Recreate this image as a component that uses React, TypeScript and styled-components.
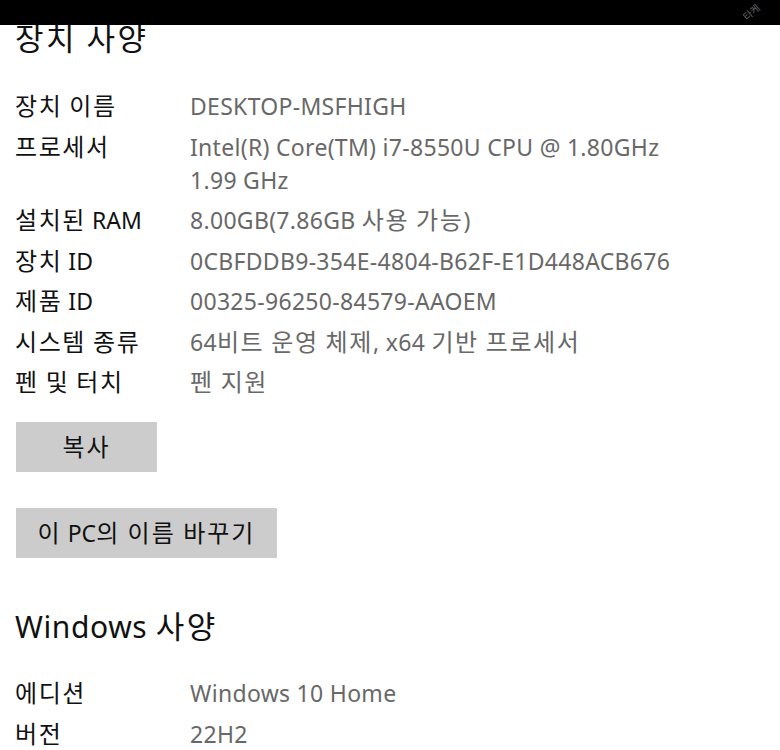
import React from "react";
import styled, { createGlobalStyle } from "styled-components";

const Global = createGlobalStyle`
  html, body { margin: 0; padding: 0; background: #fff; }
  body { font-family: "Noto Sans", "Noto Sans CJK KR", sans-serif; }
`;

const Page = styled.div`
  width: 780px;
  height: 750px;
  overflow: hidden;
  position: relative;
  background: #fff;
`;

const TopBar = styled.div`
  height: 25px;
  background: #000;
  position: relative;
  z-index: 1;
`;

const Watermark = styled.span`
  position: absolute;
  right: 20px;
  top: 6px;
  color: rgba(255, 255, 255, 0.4);
  font-size: 10px;
  line-height: 12px;
  transform: rotate(-40deg);
  font-family: "Noto Sans CJK KR", sans-serif;
`;

const Content = styled.div`
  padding: 0 0 0 15px;
  display: flex;
  flex-direction: column;
`;

const Heading = styled.h1<{ $top: number }>`
  margin: ${(p) => p.$top}px 0 0 0;
  height: 30px;
  font-family: "Noto Sans", "Noto Sans CJK KR", sans-serif;
  font-weight: 400;
  font-size: 30px;
  line-height: 30px;
  color: #111;
  letter-spacing: 0.6px;
  white-space: nowrap;
`;

/* Hangul runs: Malgun-Gothic-like size and spacing */
const Ko = styled.span<{ $size: number; $ls: number }>`
  font-family: "Noto Sans CJK KR", sans-serif;
  font-size: ${(p) => p.$size}px;
  letter-spacing: ${(p) => p.$ls}px;
  line-height: 1;
`;

const Specs = styled.dl<{ $top: number }>`
  margin: ${(p) => p.$top}px 0 0 0;
  display: grid;
  grid-template-columns: 175px 1fr;
  row-gap: 7.5px;
`;

const Label = styled.dt`
  margin: 0;
  font-size: 23px;
  line-height: 33px;
  color: #111;
  font-family: "Noto Sans", "Noto Sans CJK KR", sans-serif;
  font-weight: 400;
  white-space: nowrap;
`;

const Value = styled.dd`
  margin: 0;
  font-size: 23px;
  line-height: 33px;
  color: #686868;
  font-family: "Noto Sans", "Noto Sans CJK KR", sans-serif;
  letter-spacing: 0.3px;
  white-space: nowrap;
`;

const Line = styled.div`
  height: 33px;
`;

const Button = styled.button<{ $w: number; $top: number }>`
  margin: ${(p) => p.$top}px 0 0 1px;
  width: ${(p) => p.$w}px;
  height: 50px;
  border: none;
  background: #cccccc;
  color: #111;
  font-size: 23px;
  line-height: 50px;
  font-family: "Noto Sans", "Noto Sans CJK KR", sans-serif;
  padding: 0;
  align-self: flex-start;
  white-space: nowrap;
`;

function Txt({ s, size = 24, ls = 1.6 }: { s: string; size?: number; ls?: number }) {
  const parts = s.split(/([\uAC00-\uD7A3]+(?: [\uAC00-\uD7A3]+)*)/);
  return (
    <>
      {parts.map((p, i) =>
        /[\uAC00-\uD7A3]/.test(p) ? (
          <Ko key={i} $size={size} $ls={ls}>
            {p}
          </Ko>
        ) : (
          <React.Fragment key={i}>{p}</React.Fragment>
        )
      )}
    </>
  );
}

const device = [
  ["장치 이름", "DESKTOP-MSFHIGH"],
  ["프로세서", "Intel(R) Core(TM) i7-8550U CPU @ 1.80GHz\n1.99 GHz"],
  ["설치된 RAM", "8.00GB(7.86GB 사용 가능)"],
  ["장치 ID", "0CBFDDB9-354E-4804-B62F-E1D448ACB676"],
  ["제품 ID", "00325-96250-84579-AAOEM"],
  ["시스템 종류", "64비트 운영 체제, x64 기반 프로세서"],
  ["펜 및 터치", "펜 지원"],
];

const windows = [
  ["에디션", "Windows 10 Home"],
  ["버전", "22H2"],
];

function Rows({ items }: { items: string[][] }) {
  return (
    <>
      {items.map(([k, v]) => (
        <React.Fragment key={k}>
          <Label>
            <Txt s={k} />
          </Label>
          <Value>
            {v.split("\n").map((line, i) => (
              <Line key={i}>
                <Txt s={line} />
              </Line>
            ))}
          </Value>
        </React.Fragment>
      ))}
    </>
  );
}

export default function App() {
  return (
    <>
      <Global />
      <Page>
        <TopBar>
          <Watermark>타케</Watermark>
        </TopBar>
        <Content>
          <Heading $top={-4}>
            <Txt s="장치 사양" size={31} ls={2.5} />
          </Heading>
          <Specs $top={39}>
            <Rows items={device} />
          </Specs>
          <Button $w={141} $top={23}>
            <Txt s="복사" ls={2} />
          </Button>
          <Button $w={261} $top={36}>
            <Txt s="이 PC의 이름 바꾸기" ls={2} />
          </Button>
          <Heading $top={51}>
            <Txt s="Windows 사양" size={31} ls={2.5} />
          </Heading>
          <Specs $top={38}>
            <Rows items={windows} />
          </Specs>
        </Content>
      </Page>
    </>
  );
}
